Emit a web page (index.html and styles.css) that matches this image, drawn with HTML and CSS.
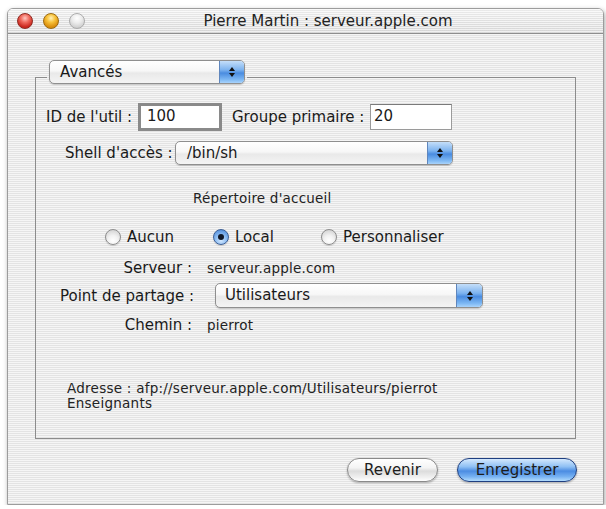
FILE: index.html
```html
<!DOCTYPE html>
<html lang="fr">
<head>
<meta charset="utf-8">
<title>Pierre Martin : serveur.apple.com</title>
<link rel="stylesheet" href="styles.css">
</head>
<body>
<div class="window">
  <div class="titlebar">
    <div class="lights">
      <span class="light red"></span>
      <span class="light yellow"></span>
      <span class="light grey"></span>
    </div>
    <div class="title">Pierre Martin : serveur.apple.com</div>
  </div>
  <div class="content">
    <fieldset class="group">
      <legend class="group-legend">
        <div class="popup popup-tab">
          <span class="popup-label">Avancés</span>
          <span class="popup-arrows"><svg width="8" height="12" viewBox="0 0 8 12"><path d="M4 1 L7 5 L1 5 Z M4 11 L7 7 L1 7 Z" fill="#111"/></svg></span>
        </div>
      </legend>

      <div class="row row-ids">
        <label class="lbl lbl-id">ID de l'util :</label>
        <div class="field field-focus">100</div>
        <label class="lbl lbl-group">Groupe primaire :</label>
        <div class="field field-plain">20</div>
      </div>

      <div class="row row-shell">
        <label class="lbl lbl-shell">Shell d'accès :</label>
        <div class="popup popup-shell">
          <span class="popup-label">/bin/sh</span>
          <span class="popup-arrows"><svg width="8" height="12" viewBox="0 0 8 12"><path d="M4 1 L7 5 L1 5 Z M4 11 L7 7 L1 7 Z" fill="#111"/></svg></span>
        </div>
      </div>

      <div class="section-title">Répertoire d'accueil</div>

      <div class="row row-radios">
        <div class="radio-item"><span class="radio"></span><span class="radio-text">Aucun</span></div>
        <div class="radio-item"><span class="radio radio-on"><span class="dot"></span></span><span class="radio-text">Local</span></div>
        <div class="radio-item radio-last"><span class="radio"></span><span class="radio-text">Personnaliser</span></div>
      </div>

      <div class="row row-info row-server">
        <label class="lbl lbl-col">Serveur :</label>
        <span class="value">serveur.apple.com</span>
      </div>

      <div class="row row-share">
        <label class="lbl lbl-col">Point de partage :</label>
        <div class="popup popup-share">
          <span class="popup-label">Utilisateurs</span>
          <span class="popup-arrows"><svg width="8" height="12" viewBox="0 0 8 12"><path d="M4 1 L7 5 L1 5 Z M4 11 L7 7 L1 7 Z" fill="#111"/></svg></span>
        </div>
      </div>

      <div class="row row-info row-path">
        <label class="lbl lbl-col">Chemin :</label>
        <span class="value">pierrot</span>
      </div>

      <div class="address">
        <div>Adresse : afp://serveur.apple.com/Utilisateurs/pierrot</div>
        <div>Enseignants</div>
      </div>
    </fieldset>

    <div class="buttons">
      <button class="btn btn-plain">Revenir</button>
      <button class="btn btn-default">Enregistrer</button>
    </div>
  </div>
</div>
</body>
</html>
```

FILE: styles.css
```css
* { box-sizing: border-box; }

html, body {
  margin: 0;
  padding: 0;
  background: #ffffff;
}

body {
  font-family: "DejaVu Sans", "Noto Sans", sans-serif;
  font-size: 15px;
  color: #1a1a1a;
}

.window {
  margin: 8px 0 0 7px;
  width: 597px;
  height: 497px;
  border: 1px solid #9c9c9c;
  border-radius: 6px 6px 0 0;
  box-shadow: 1px 2px 5px rgba(0, 0, 0, 0.35);
  overflow: hidden;
  display: flex;
  flex-direction: column;
}

.titlebar {
  height: 25px;
  flex: none;
  display: flex;
  align-items: center;
  border-bottom: 1px solid #8e8e8e;
  background:
    repeating-linear-gradient(to bottom, rgba(255,255,255,0.55) 0 1px, rgba(0,0,0,0.04) 1px 2px),
    linear-gradient(to bottom, #f4f4f4, #dedede);
}

.lights {
  display: flex;
  gap: 10px;
  margin-left: 9px;
}

.light {
  width: 16px;
  height: 16px;
  border-radius: 50%;
  display: block;
}

.red {
  background: radial-gradient(circle at 50% 30%, #ffc7c0 0, #f06a5e 35%, #c8231a 75%, #d9584c 100%);
  border: 1px solid #8e2a22;
}

.yellow {
  background: radial-gradient(circle at 50% 30%, #fff1b8 0, #f8c23a 35%, #d88a08 75%, #f0b43a 100%);
  border: 1px solid #9a6a12;
}

.grey {
  background: radial-gradient(circle at 50% 30%, #ffffff 0, #ececec 40%, #cdcdcd 80%, #e0e0e0 100%);
  border: 1px solid #ababab;
}

.title {
  flex: 1;
  text-align: center;
  margin-right: 32px;
  font-size: 15px;
  color: #222;
  white-space: nowrap;
}

.content {
  flex: 1;
  padding: 26px 0 0 27px;
  background: repeating-linear-gradient(to bottom, #f5f5f5 0 1px, #e3e3e3 1px 2px);
}

.group {
  margin: 0;
  padding: 0 0 27px 0;
  width: 541px;
  border: 1px solid #8c8c8c;
  min-width: 0;
}

.group-legend {
  margin-left: 11px;
  padding: 0 2px 10px 2px;
}

.popup {
  display: flex;
  flex: none;
  height: 24px;
  border: 1px solid #8f8f8f;
  border-radius: 5px;
  background: linear-gradient(to bottom, #ffffff 0%, #f7f7f7 45%, #e9e9e9 55%, #f4f4f4 100%);
  box-shadow: 0 1px 1px rgba(0, 0, 0, 0.18);
  overflow: hidden;
}

.popup-label {
  flex: 1;
  line-height: 22px;
  padding-left: 10px;
  white-space: nowrap;
}

.popup-arrows {
  width: 25px;
  flex: none;
  display: flex;
  align-items: center;
  justify-content: center;
  border-left: 1px solid #5f86bd;
  background: linear-gradient(to bottom, #c4def9 0%, #7db3ef 40%, #4a8ce0 55%, #7fb9f4 85%, #a9d3fb 100%);
}

.popup-tab { width: 196px; }

.popup-shell { width: 278px; }
.popup-shell .popup-label { padding-left: 11px; }

.popup-share { width: 268px; height: 25px; }
.popup-share .popup-label { padding-left: 9px; line-height: 23px; }
.popup-share .popup-arrows { width: 26px; }

.row {
  display: flex;
  align-items: center;
}

.lbl { white-space: nowrap; flex: none; }

.row-ids {
  margin-top: 9px;
  margin-left: 10px;
  height: 28px;
}

.lbl-id { width: 92px; }

.field {
  flex: none;
  background: #ffffff;
  white-space: nowrap;
}

.field-focus {
  width: 84px;
  height: 28px;
  border: 3px solid #8a8a8a;
  padding-left: 6px;
  line-height: 21px;
}

.lbl-group {
  width: 138px;
  margin-left: 10px;
}

.field-plain {
  width: 82px;
  height: 26px;
  border: 1px solid #9a9a9a;
  border-top-color: #7a7a7a;
  padding-left: 3px;
  line-height: 22px;
}

.row-shell {
  margin-top: 10px;
  margin-left: 29px;
  height: 24px;
}

.lbl-shell {
  width: 104px;
  text-align: right;
  margin-right: 6px;
}

.small {
  font-size: 13.5px;
}

.section-title {
  margin-top: 25px;
  margin-left: 157px;
  font-size: 13.5px;
  letter-spacing: 0.2px;
  line-height: 16px;
  color: #222;
}

.row-radios {
  margin-top: 22px;
  margin-left: 69px;
  height: 18px;
}

.radio-item {
  width: 108px;
  flex: none;
  display: flex;
  align-items: center;
  white-space: nowrap;
}

.radio-last { width: auto; }

.radio {
  width: 16px;
  height: 16px;
  flex: none;
  border-radius: 50%;
  border: 1px solid #8d8d8d;
  background: radial-gradient(circle at 50% 75%, #ffffff 0, #f2f2f2 40%, #c9c9c9 100%);
  box-shadow: 0 1px 1px rgba(0,0,0,0.15);
  display: flex;
  align-items: center;
  justify-content: center;
  margin-right: 6px;
}

.radio-on {
  border-color: #3c5f96;
  background: radial-gradient(circle at 50% 75%, #d2e8ff 0, #8cbcf2 45%, #3f7fd4 100%);
}

.dot {
  width: 6px;
  height: 6px;
  border-radius: 50%;
  background: #101828;
}

.row-info { height: 18px; }

.row-server { margin-top: 13px; }

.lbl-col {
  width: 132px;
  margin-left: 24px;
  text-align: right;
}

.value {
  margin-left: 15px;
  font-size: 13.5px;
  letter-spacing: 0.2px;
  color: #222;
}

.row-share {
  margin-top: 6px;
  height: 25px;
}

.row-share .popup { margin-left: 23px; }

.row-path { margin-top: 8px; }

.address {
  margin-top: 47px;
  margin-left: 31px;
  font-size: 13.5px;
  letter-spacing: 0.25px;
  line-height: 15px;
  color: #222;
}

.buttons {
  display: flex;
  justify-content: flex-end;
  gap: 19px;
  margin-top: 19px;
  width: 542px;
}

.btn {
  height: 24px;
  border-radius: 12px;
  font-family: "DejaVu Sans", "Noto Sans", sans-serif;
  font-size: 15px;
  color: #1c1c1c;
  padding: 0;
  line-height: 21px;
  box-shadow: 0 1px 2px rgba(0, 0, 0, 0.3);
}

.btn-plain {
  width: 91px;
  border: 1px solid #8a8a8a;
  background: linear-gradient(to bottom, #ffffff 0%, #f4f4f4 40%, #dcdcdc 55%, #f2f2f2 85%, #ffffff 100%);
}

.btn-default {
  width: 120px;
  border: 1px solid #1f3f80;
  background: linear-gradient(to bottom, #d4e8fd 0%, #8fc0f4 35%, #4b8ce2 55%, #76b1f2 80%, #b3dcfd 100%);
}
```
